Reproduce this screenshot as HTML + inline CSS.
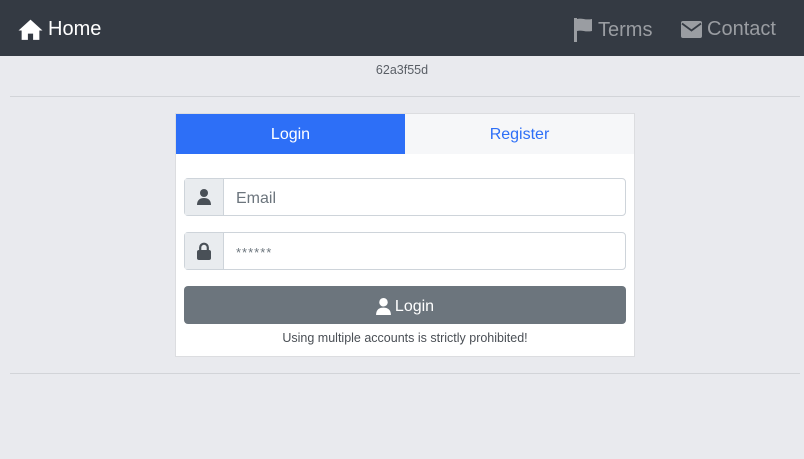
<!DOCTYPE html>
<html><head><meta charset="utf-8"><style>
*{box-sizing:border-box;margin:0;padding:0}
body{width:804px;height:459px;background:#e9eaee;font-family:"Liberation Sans",sans-serif;overflow:hidden;position:relative}
.nav{position:absolute;left:0;top:0;width:804px;height:56px;background:#343a43}
.nav .a{position:absolute;top:18px;font-size:20px;display:flex;align-items:center;gap:5px}
.ver{position:absolute;top:63px;width:804px;text-align:center;font-size:12.5px;color:#5a5f66}
.hr{position:absolute;left:10px;width:790px;height:1px;background:#d2d4d8}
.card{position:absolute;left:175px;top:113px;width:460px;height:244px;background:#fff;border:1px solid #dcdde0}
.tab{position:absolute;top:0;height:40px;width:229px;font-size:16px;text-align:center;line-height:42px}
.grp{position:absolute;left:8px;width:442px;height:38px;border:1px solid #ced4da;border-radius:4px;display:flex}
.grp .ic{width:39px;background:#e9ecef;border-right:1px solid #ced4da;display:flex;align-items:center;justify-content:center}
.grp .t{padding-left:12px;line-height:39px;font-size:16px;color:#6c757d}
.btn{position:absolute;left:8px;top:172px;width:442px;height:38px;padding-top:3px;background:#6c757d;border-radius:4px;color:#fff;font-size:16px;display:flex;align-items:center;justify-content:center;gap:4px}
.note{position:absolute;top:217px;width:100%;text-align:center;font-size:12.5px;color:#4a4f55}
</style></head><body>
<div class="nav">
 <div class="a" style="left:18px;color:#fff"><svg width="25" height="21" viewBox="0 0 24 20"><path d="M12 0.5L0.5 11h3v9h6v-6h5v6h6v-9h3z" fill="#fff"/></svg>Home</div>
 <div class="a" style="left:573px;color:#9a9da2"><svg width="20" height="24" viewBox="0 0 20 24"><rect x="1" y="0" width="3" height="24" fill="#9a9da2"/><path d="M4 1c5-1.5 8 1.5 15 0v12c-7 1.5-10-1.5-15 0z" fill="#9a9da2"/></svg>Terms</div>
 <div class="a" style="left:681px;color:#9a9da2"><svg width="21" height="17" viewBox="0 0 21 17"><rect x="0" y="0" width="21" height="17" rx="2" fill="#9a9da2"/><path d="M1 2.5l9.5 7 9.5-7" stroke="#343a43" stroke-width="1.8" fill="none"/></svg>Contact</div>
</div>
<div class="ver">62a3f55d</div>
<div class="hr" style="top:96px"></div>
<div class="card">
 <div class="tab" style="left:0;background:#2d6ff7;color:#fff">Login</div>
 <div class="tab" style="left:229px;width:229px;background:#f6f7f9;color:#2d6ff7">Register</div>
 <div class="grp" style="top:64px"><div class="ic"><svg width="14" height="16" viewBox="0 0 14 16"><circle cx="7" cy="4" r="4" fill="#495057"/><path d="M0 16c0-5 3-7 7-7s7 2 7 7z" fill="#495057"/></svg></div><div class="t">Email</div></div>
 <div class="grp" style="top:118px"><div class="ic"><svg width="14" height="18" viewBox="0 0 14 18"><path d="M3.2 9V5.5a3.8 3.8 0 0 1 7.6 0V9" stroke="#495057" stroke-width="2.2" fill="none"/><rect x="0" y="8" width="14" height="10" rx="2" fill="#495057"/></svg></div><div class="t" style="font-size:13px;letter-spacing:1px">******</div></div>
 <div class="btn"><svg width="15" height="17" viewBox="0 0 14 16"><circle cx="7" cy="4" r="4" fill="#fff"/><path d="M0 16c0-5 3-7 7-7s7 2 7 7z" fill="#fff"/></svg>Login</div>
 <div class="note">Using multiple accounts is strictly prohibited!</div>
</div>
<div class="hr" style="top:373px"></div>
</body></html>
